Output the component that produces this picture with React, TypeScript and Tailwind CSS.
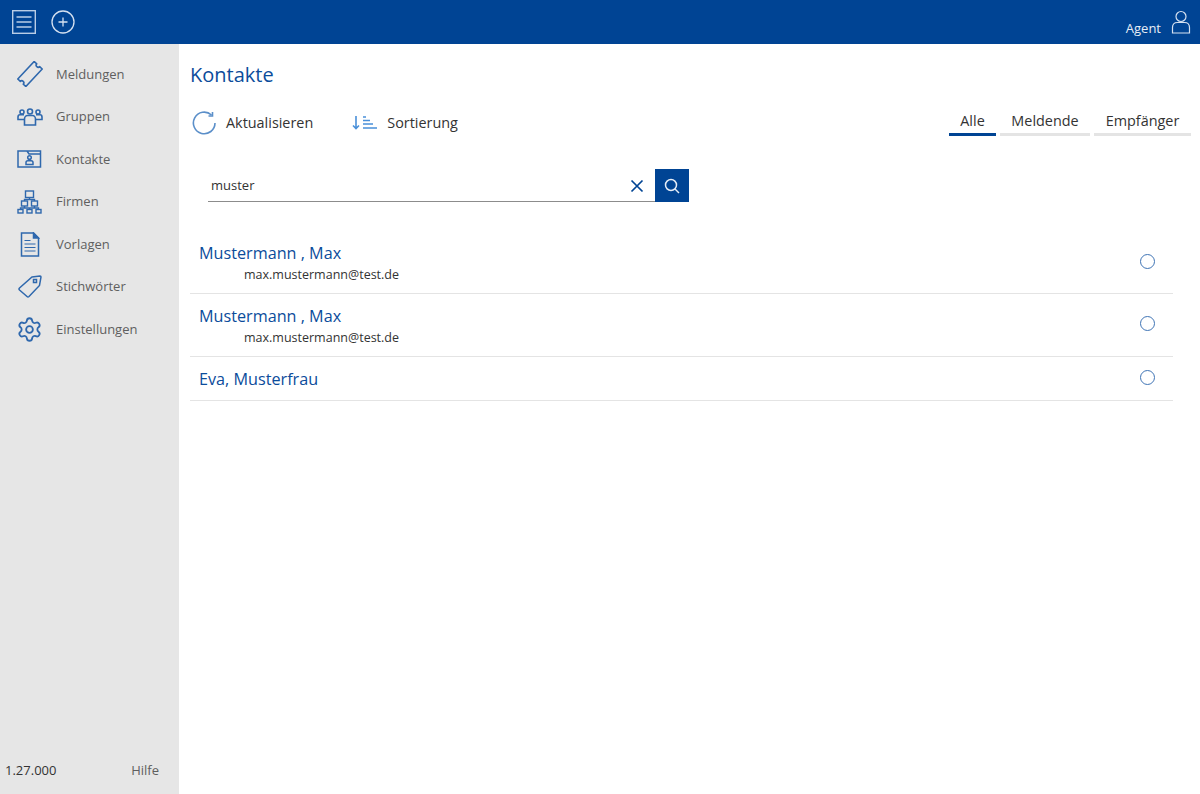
import { Settings } from 'lucide-react'

const blue = '#004494'

function IconMenu() {
  return (
    <svg width="24" height="24" viewBox="0 0 24 24" fill="none" stroke="#b9cde6" strokeWidth="1.4">
      <rect x="0.7" y="0.7" width="22.6" height="22.6" />
      <path d="M4.500 7h15M4.500 12h15M4.500 17h15" />
    </svg>
  )
}

function IconPlus() {
  return (
    <svg width="24" height="24" viewBox="0 0 24 24" fill="none" stroke="#d5e1f0" strokeWidth="1.3">
      <circle cx="12" cy="12" r="11" />
      <path d="M12 7.500v9M7.500 12h9" />
    </svg>
  )
}

function IconUser() {
  return (
    <svg width="20" height="24" viewBox="0 0 20 24" fill="none" stroke="#d5e1f0" strokeWidth="1.2">
      <circle cx="10" cy="6.500" r="5" />
      <path d="M6.500 12.500h7c3 0 5 2 5 5V23H1.500v-5.500c0-3 2-5 5-5z" />
    </svg>
  )
}

function NavIcon({ name }: { name: string }) {
  const stroke = '#2f68ad'
  if (name === 'Meldungen')
    return (
      <svg width="26" height="26" viewBox="-13 -13 26 26" fill="none" stroke={stroke} strokeWidth="1.6">
        <path
          d="M-12 -5.500H12V-2a2 2 0 0 0 0 4V5.500H-12V2a2 2 0 0 0 0 -4z"
          strokeLinejoin="round"
          transform="rotate(-47)"
        />
      </svg>
    )
  if (name === 'Gruppen')
    return (
      <svg width="26" height="18" viewBox="0 0 26 18" fill="none" stroke={stroke} strokeWidth="1.600">
        <circle cx="5" cy="4" r="2" />
        <circle cx="13" cy="3.500" r="2.500" />
        <circle cx="21" cy="4" r="2" />
        <path d="M7 11.500H1V9c0-1.300 1-2.200 2-2.200h4M19 11.500h6V9c0-1.300-1-2.200-2-2.200h-4" />
        <path d="M7.500 17V11c0-2 1.500-3.500 3-3.500h5c1.500 0 3 1.500 3 3.500v6z" fill="#e6e6e6" />
      </svg>
    )
  if (name === 'Kontakte')
    return (
      <svg width="25" height="18" viewBox="0 0 25 18" fill="none" stroke={stroke} strokeWidth="1.500">
        <path d="M1 17V1h22.500v16zM1 1l9 0 2 3h11.500" />
        <circle cx="12.500" cy="7.500" r="1.800" />
        <path d="M9 14.500v-2c0-1 .8-1.800 1.800-1.800h3.400c1 0 1.800.8 1.800 1.800v2z" />
      </svg>
    )
  if (name === 'Firmen')
    return (
      <svg width="25" height="24" viewBox="0 0 25 24" fill="none" stroke={stroke} strokeWidth="1.400">
        <rect x="8.500" y="1" width="8" height="6.500" />
        <rect x="4.500" y="11" width="6" height="5" />
        <rect x="14.500" y="11" width="6" height="5" />
        <rect x="1" y="19.500" width="5" height="3.500" />
        <rect x="10" y="19.500" width="5" height="3.500" />
        <rect x="19" y="19.500" width="5" height="3.500" />
        <path d="M12.500 7.500v2M7.500 11V9.500h10V11M7.500 16v2M3.500 19.500V18h9v1.500M17.500 16v2M12.500 18h9v1.500" />
      </svg>
    )
  if (name === 'Vorlagen')
    return (
      <svg width="20" height="25" viewBox="0 0 20 25" fill="none" stroke={stroke} strokeWidth="1.500">
        <path d="M1.500 1h12l5 5v18h-17z" />
        <path d="M13.500 1l5 5h-5z" fill={stroke} />
        <path d="M4.500 8.500h6M4.500 12h11M4.500 15.500h11M4.500 19h11" strokeWidth="1.200" />
      </svg>
    )
  if (name === 'Stichwörter')
    return (
      <svg width="24" height="23" viewBox="0 0 24 23" fill="none" stroke={stroke} strokeWidth="1.500">
        <path d="M14 2l8-1c.6 0 1 .4 1 1l-1.500 8.500L11 21.500c-.6.6-1.400.6-2 0l-7.500-6.500c-.6-.6-.6-1.400 0-2z" />
        <rect x="15.500" y="4.500" width="3" height="3" />
      </svg>
    )
  return <Settings size={27} color={stroke} strokeWidth={1.6} />
}

const navItems = ['Meldungen', 'Gruppen', 'Kontakte', 'Firmen', 'Vorlagen', 'Stichwörter', 'Einstellungen']

const contacts = [
  { name: 'Mustermann , Max', mail: 'max.mustermann@test.de' },
  { name: 'Mustermann , Max', mail: 'max.mustermann@test.de' },
  { name: 'Eva, Musterfrau', mail: '' },
]

const tabs = [
  { label: 'Alle', w: 'w-[47px]', on: true },
  { label: 'Meldende', w: 'w-[90px]', on: false },
  { label: 'Empfänger', w: 'w-[97px]', on: false },
]

export default function App() {
  return (
    <div className="flex h-[794px] w-[1200px] flex-col overflow-hidden bg-white font-['Open_Sans',sans-serif]">
      <header className="flex h-[44px] shrink-0 items-center justify-between bg-[#004494] pl-[12px] pr-[9px]">
        <div className="flex items-center gap-[15px]">
          <IconMenu />
          <IconPlus />
        </div>
        <div className="flex items-center gap-[10px]">
          <span className="mt-[14px] text-[13px] text-[#e6edf6]">Agent</span>
          <IconUser />
        </div>
      </header>
      <div className="flex flex-1">
        <aside className="flex w-[179px] shrink-0 flex-col justify-between bg-[#e6e6e6]">
          <nav className="flex flex-col pt-[9px]">
            {navItems.map(item => (
              <div key={item} className="flex h-[42.5px] items-center">
                <div className="flex w-[56px] shrink-0 justify-center pl-[3px]">
                  <NavIcon name={item} />
                </div>
                <span className="text-[13px] text-[#5f5f5f]">{item}</span>
              </div>
            ))}
          </nav>
          <div className="flex items-center justify-between pb-[14px] pl-[5px] pr-[20px] text-[13px]">
            <span className="text-[#333]">1.27.000</span>
            <span className="text-[#5f5f5f]">Hilfe</span>
          </div>
        </aside>
        <main className="flex-1 pl-[11px] pr-[9px]">
          <h1 className="pt-[16px] text-[20px] leading-[30px] text-[#0b4c9b]">Kontakte</h1>
          <div className="mt-[16px] flex h-[34px] items-center justify-between">
            <div className="flex items-center">
              <button className="flex items-center gap-[10px] pl-[2px] text-[14.400px] text-[#333]">
                <svg width="24" height="24" viewBox="0 0 24 24" fill="none" stroke="#5b8fc9" strokeWidth="1.600">
                  <path d="M19.500 4A10.800 10.800 0 1 0 23 12" />
                  <path d="M20.500 1v4h-4" />
                </svg>
                Aktualisieren
              </button>
              <button className="ml-[39px] flex items-center gap-[10px] text-[14.400px] text-[#333]">
                <svg width="25" height="16" viewBox="0 0 25 16" fill="none" stroke="#4a90d9" strokeWidth="1.400">
                  <path d="M4 1v12M1 10.500l3 3 3-3" strokeWidth="1.600" />
                  <path d="M11 2h3M11 5.500h7M11 9h10M11 13h14" />
                </svg>
                Sortierung
              </button>
            </div>
            <div className="-mt-[4px] flex gap-[4px] self-start">
              {tabs.map(t => (
                <div
                  key={t.label}
                  className={`${t.w} h-[34px] border-b-[3px] pt-[10px] text-center text-[14.400px] leading-[18px] text-[#333] ${t.on ? 'border-[#004494]' : 'border-[#e4e4e4]'}`}
                >
                  {t.label}
                </div>
              ))}
            </div>
          </div>
          <div className="ml-[18px] mt-[29px] flex w-[481px]">
            <div className="flex h-[33px] flex-1 items-center justify-between border-b border-[#8c8c8c] pl-[3px] pr-[11px] pt-[2px]">
              <span className="text-[13px] text-[#333]">muster</span>
              <svg width="14" height="14" viewBox="0 0 14 14" fill="none" stroke={blue} strokeWidth="1.700">
                <path d="M1.500 1.500l11 11M12.500 1.500l-11 11" />
              </svg>
            </div>
            <button className="flex h-[33px] w-[34px] items-center justify-center bg-[#004494]">
              <svg width="16" height="16" viewBox="0 0 16 16" fill="none" stroke="#e6edf6" strokeWidth="1.500">
                <circle cx="7" cy="7" r="5.500" />
                <path d="M11 11l4 4" />
              </svg>
            </button>
          </div>
          <ul className="mr-[18px] mt-[29px]">
            {contacts.map((c, i) => (
              <li
                key={i}
                className={`flex items-center justify-between border-b border-[#e4e4e4] pl-[9px] pr-[18px] ${c.mail ? 'h-[63px]' : 'h-[44px]'}`}
              >
                <div className={`flex flex-col ${c.mail ? 'pt-[3px]' : ''}`}>
                  <span className="text-[16.200px] leading-[22px] text-[#0b4c9b]">{c.name}</span>
                  {c.mail && <span className="pl-[45px] text-[12.500px] leading-[21px] text-[#333]">{c.mail}</span>}
                </div>
                <span className={`h-[15px] w-[15px] rounded-full border border-[#3f74b5] ${i === 0 ? 'mb-[2px]' : 'mb-[3px]'}`} />
              </li>
            ))}
          </ul>
        </main>
      </div>
    </div>
  )
}
